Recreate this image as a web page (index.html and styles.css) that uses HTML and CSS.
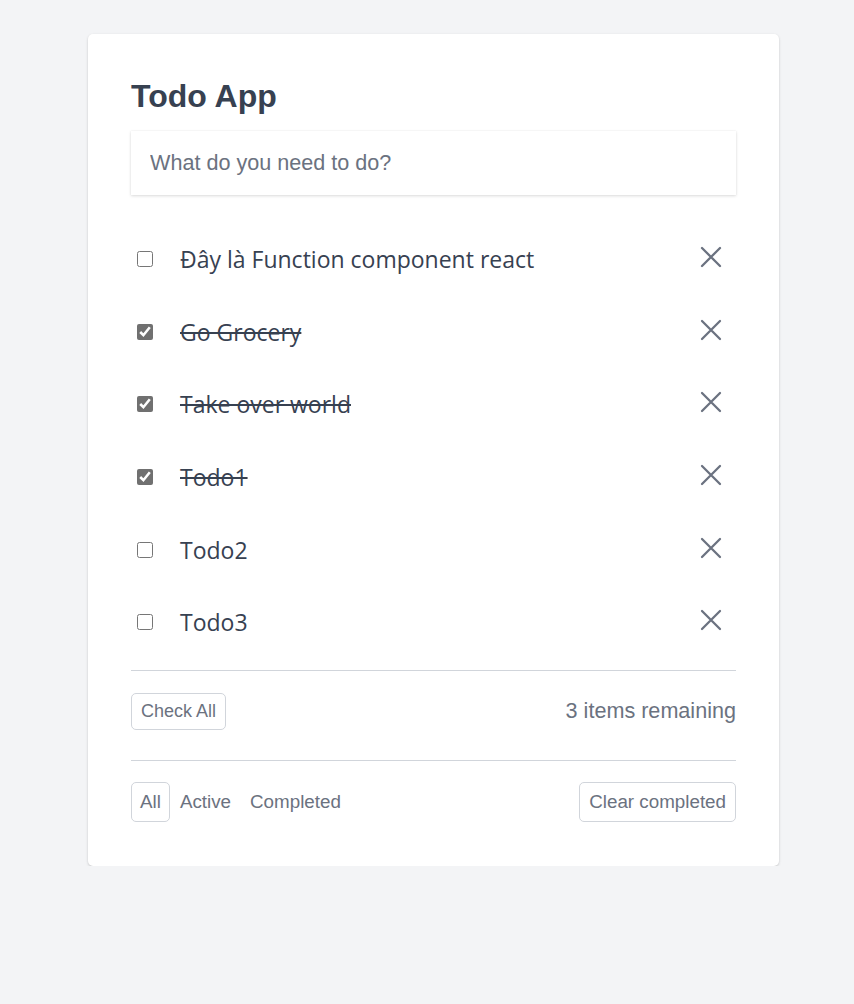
FILE: index.html
```html
<!DOCTYPE html>
<html lang="vi">
<head>
<meta charset="utf-8">
<title>Todo App</title>
<link rel="stylesheet" href="styles.css">
</head>
<body>
<main class="card">
  <h1 class="title">Todo App</h1>
  <input class="new-todo" type="text" placeholder="What do you need to do?">
  <ul class="todo-list">
    <li class="todo">
      <input class="toggle" type="checkbox">
      <span class="label">Đây là Function component react</span>
      <button class="remove" aria-label="Remove"><svg viewBox="0 0 24 24" width="24" height="24"><path d="M3 3L21 21M21 3L3 21"/></svg></button>
    </li>
    <li class="todo done">
      <input class="toggle" type="checkbox" checked>
      <span class="label">Go Grocery</span>
      <button class="remove" aria-label="Remove"><svg viewBox="0 0 24 24" width="24" height="24"><path d="M3 3L21 21M21 3L3 21"/></svg></button>
    </li>
    <li class="todo done">
      <input class="toggle" type="checkbox" checked>
      <span class="label">Take over world</span>
      <button class="remove" aria-label="Remove"><svg viewBox="0 0 24 24" width="24" height="24"><path d="M3 3L21 21M21 3L3 21"/></svg></button>
    </li>
    <li class="todo done">
      <input class="toggle" type="checkbox" checked>
      <span class="label">Todo1</span>
      <button class="remove" aria-label="Remove"><svg viewBox="0 0 24 24" width="24" height="24"><path d="M3 3L21 21M21 3L3 21"/></svg></button>
    </li>
    <li class="todo">
      <input class="toggle" type="checkbox">
      <span class="label">Todo2</span>
      <button class="remove" aria-label="Remove"><svg viewBox="0 0 24 24" width="24" height="24"><path d="M3 3L21 21M21 3L3 21"/></svg></button>
    </li>
    <li class="todo">
      <input class="toggle" type="checkbox">
      <span class="label">Todo3</span>
      <button class="remove" aria-label="Remove"><svg viewBox="0 0 24 24" width="24" height="24"><path d="M3 3L21 21M21 3L3 21"/></svg></button>
    </li>
  </ul>
  <div class="bar bar-top">
    <button class="btn btn-check">Check All</button>
    <span class="remaining">3 items remaining</span>
  </div>
  <div class="bar bar-bottom">
    <div class="filters">
      <button class="btn filter active">All</button>
      <button class="btn filter">Active</button>
      <button class="btn filter">Completed</button>
    </div>
    <button class="btn">Clear completed</button>
  </div>
</main>
</body>
</html>
```
FILE: styles.css
```css
html, body {
  margin: 0;
  padding: 0;
}
body {
  background: #f3f4f6;
  font-family: "Liberation Sans", Arial, sans-serif;
  color: #374151;
}
.card {
  box-sizing: border-box;
  width: 691px;
  margin: 34px 0 0 88px;
  padding: 42px 43px 44px;
  background: #fff;
  border-radius: 5px;
  box-shadow: 0 1px 3px rgba(0,0,0,0.12), 0 1px 2px rgba(0,0,0,0.08);
}
.title {
  margin: 0 0 15px;
  font-size: 32px;
  line-height: 40px;
  font-weight: 700;
  color: #374151;
}
.new-todo {
  display: block;
  box-sizing: border-box;
  width: 100%;
  height: 64px;
  padding: 0 19px;
  border: none;
  outline: none;
  font-family: "Liberation Sans", Arial, sans-serif;
  font-size: 21.6px;
  color: #374151;
  background: #fff;
  box-shadow: 0 1px 3px rgba(0,0,0,0.14), 0 0 1px rgba(0,0,0,0.08);
}
.new-todo::placeholder {
  color: #6b7280;
}
.todo-list {
  list-style: none;
  margin: 28px 0 0;
  padding: 0;
}
.todo {
  display: flex;
  align-items: center;
  height: 72.6px;
}
.toggle {
  width: 16px;
  height: 16px;
  margin: 0 27px 0 6px;
  accent-color: #707070;
}
.label {
  flex: 1;
  font-family: "Open Sans", "Noto Sans", sans-serif;
  font-size: 23px;
  color: #374151;
}
.done .label {
  text-decoration: line-through;
}
.remove {
  display: flex;
  align-items: center;
  justify-content: center;
  width: 24px;
  height: 24px;
  padding: 0;
  margin: -4px 13px 0 0;
  border: none;
  background: none;
}
.remove svg path {
  stroke: #6b7280;
  stroke-width: 2.3;
  stroke-linecap: round;
  fill: none;
}
.bar {
  display: flex;
  align-items: center;
  justify-content: space-between;
  border-top: 1px solid #d1d5db;
}
.bar-top {
  margin-top: 11px;
  padding: 22px 0 30px;
}
.bar-bottom {
  padding: 21px 0 0;
}
.btn {
  font-family: "Liberation Sans", Arial, sans-serif;
  font-size: 18.8px;
  color: #6b7280;
  background: #fff;
  border: 1px solid #d1d5db;
  border-radius: 5px;
  padding: 8px 9px;
  line-height: 22px;
}
.btn-check {
  font-size: 18px;
  padding: 6px 9px;
  line-height: 23px;
}
.filters {
  display: flex;
  gap: 1px;
}
.filter {
  border-color: transparent;
  padding-left: 8px;
  padding-right: 8px;
}
.filter.active {
  border-color: #d1d5db;
}
.remaining {
  font-size: 21.6px;
  color: #6b7280;
}
```
